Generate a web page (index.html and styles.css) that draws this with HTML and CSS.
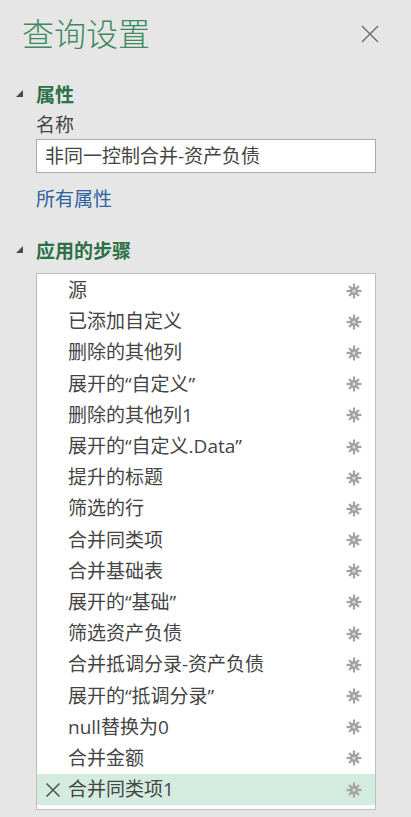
FILE: index.html
```html
<!DOCTYPE html>
<html lang="zh">
<head>
<meta charset="utf-8">
<title>查询设置</title>
<link rel="stylesheet" href="styles.css">
</head>
<body>
<div class="panel">
  <div class="header">
    <h1 class="title">查询设置</h1>
    <svg class="close" width="18" height="18" viewBox="0 0 18 18"><path d="M1 1L17 17M17 1L1 17" stroke="#6a6a6a" stroke-width="1.3" fill="none"/></svg>
  </div>

  <div class="section-title">
    <svg class="tri" width="7" height="7" viewBox="0 0 7 7"><polygon points="7,0 7,7 0,7" fill="#4a4a4a"/></svg>
    <span>属性</span>
  </div>
  <div class="label">名称</div>
  <div class="input">非同一控制合并-资产负债</div>
  <a class="link">所有属性</a>

  <div class="section-title steps-title">
    <svg class="tri" width="7" height="7" viewBox="0 0 7 7"><polygon points="7,0 7,7 0,7" fill="#4a4a4a"/></svg>
    <span>应用的步骤</span>
  </div>

  <ul class="steps">
    <li class="step"><span class="mark"></span><span class="name">源</span><svg class="gear" viewBox="0 0 16 16"><use href="#g"/></svg></li>
    <li class="step"><span class="mark"></span><span class="name">已添加自定义</span><svg class="gear" viewBox="0 0 16 16"><use href="#g"/></svg></li>
    <li class="step"><span class="mark"></span><span class="name">删除的其他列</span><svg class="gear" viewBox="0 0 16 16"><use href="#g"/></svg></li>
    <li class="step"><span class="mark"></span><span class="name">展开的“自定义”</span><svg class="gear" viewBox="0 0 16 16"><use href="#g"/></svg></li>
    <li class="step"><span class="mark"></span><span class="name">删除的其他列1</span><svg class="gear" viewBox="0 0 16 16"><use href="#g"/></svg></li>
    <li class="step"><span class="mark"></span><span class="name">展开的“自定义.Data”</span><svg class="gear" viewBox="0 0 16 16"><use href="#g"/></svg></li>
    <li class="step"><span class="mark"></span><span class="name">提升的标题</span><svg class="gear" viewBox="0 0 16 16"><use href="#g"/></svg></li>
    <li class="step"><span class="mark"></span><span class="name">筛选的行</span><svg class="gear" viewBox="0 0 16 16"><use href="#g"/></svg></li>
    <li class="step"><span class="mark"></span><span class="name">合并同类项</span><svg class="gear" viewBox="0 0 16 16"><use href="#g"/></svg></li>
    <li class="step"><span class="mark"></span><span class="name">合并基础表</span><svg class="gear" viewBox="0 0 16 16"><use href="#g"/></svg></li>
    <li class="step"><span class="mark"></span><span class="name">展开的“基础”</span><svg class="gear" viewBox="0 0 16 16"><use href="#g"/></svg></li>
    <li class="step"><span class="mark"></span><span class="name">筛选资产负债</span><svg class="gear" viewBox="0 0 16 16"><use href="#g"/></svg></li>
    <li class="step"><span class="mark"></span><span class="name">合并抵调分录-资产负债</span><svg class="gear" viewBox="0 0 16 16"><use href="#g"/></svg></li>
    <li class="step"><span class="mark"></span><span class="name">展开的“抵调分录”</span><svg class="gear" viewBox="0 0 16 16"><use href="#g"/></svg></li>
    <li class="step"><span class="mark"></span><span class="name">null替换为0</span><svg class="gear" viewBox="0 0 16 16"><use href="#g"/></svg></li>
    <li class="step"><span class="mark"></span><span class="name">合并金额</span><svg class="gear" viewBox="0 0 16 16"><use href="#g"/></svg></li>
    <li class="step selected"><span class="mark"><svg width="16" height="16" viewBox="0 0 16 16"><path d="M1.5 1.5L14.5 14.5M14.5 1.5L1.5 14.5" stroke="#555" stroke-width="1.6" fill="none"/></svg></span><span class="name">合并同类项1</span><svg class="gear" viewBox="0 0 16 16"><use href="#g"/></svg></li>
  </ul>
</div>

<svg width="0" height="0" class="defs">
  <defs>
    <g id="g" fill="#a3a3a3">
      <circle cx="8" cy="8" r="4"/>
      <rect x="6.9" y="0.5" width="2.2" height="15"/>
      <rect x="0.5" y="6.9" width="15" height="2.2"/>
      <rect x="6.9" y="1" width="2.2" height="14" transform="rotate(45 8 8)"/>
      <rect x="6.9" y="1" width="2.2" height="14" transform="rotate(-45 8 8)"/>
      <circle cx="8" cy="8" r="1.6" fill="#dcdcdc"/>
    </g>
  </defs>
</svg>
</body>
</html>
```

FILE: styles.css
```css
* { box-sizing: border-box; }

html, body {
  margin: 0;
  padding: 0;
  background: #e6e6e6;
}

body {
  font-family: "Open Sans", "Noto Sans CJK SC", sans-serif;
  color: #444;
  width: 411px;
  height: 817px;
  overflow: hidden;
}

.panel {
  padding: 12px 35px 0 36px;
}

.header {
  display: flex;
  align-items: center;
  justify-content: space-between;
  margin-left: -14px;
  margin-right: -3px;
  height: 41px;
}

.title {
  margin: 0;
  font-family: "Noto Sans CJK SC", sans-serif;
  font-weight: 300;
  font-size: 32px;
  line-height: 41px;
  color: #3d8a5e;
}

.close {
  display: block;
  margin-top: 3px;
}

.section-title {
  display: flex;
  align-items: center;
  gap: 13px;
  margin-left: -20px;
  margin-top: 28.5px;
  height: 26px;
  font-size: 19px;
  line-height: 26px;
  font-weight: 700;
  color: #2c7048;
}

.section-title .tri {
  display: block;
  margin-top: -3px;
}

.label {
  margin-top: 4px;
  font-size: 19px;
  line-height: 26px;
  color: #444;
}

.input {
  margin-top: 1.5px;
  height: 34px;
  border: 1px solid #ababab;
  background: #fff;
  padding-left: 8px;
  font-size: 19px;
  line-height: 32px;
  color: #444;
}

.link {
  display: block;
  margin-top: 12.5px;
  font-size: 19px;
  line-height: 26px;
  color: #2d62a0;
}

.steps-title {
  margin-top: 26px;
}

.steps {
  list-style: none;
  margin: 9px 0 0 0;
  padding: 1.5px 0 0 0;
  height: 537.5px;
  border: 1px solid #bdbdbd;
  background: #fff;
}

.step {
  display: flex;
  align-items: center;
  height: 31.2px;
  padding: 0 13px 0 8px;
  font-size: 19px;
  color: #444;
}

.step.selected {
  background: #d3ecdf;
}

.mark {
  display: flex;
  width: 16px;
  height: 16px;
  margin-right: 7px;
  flex: none;
}

.name {
  flex: 1;
  white-space: nowrap;
  line-height: 31px;
}

.gear {
  width: 16px;
  height: 16px;
  flex: none;
}

.defs {
  position: absolute;
}
```
